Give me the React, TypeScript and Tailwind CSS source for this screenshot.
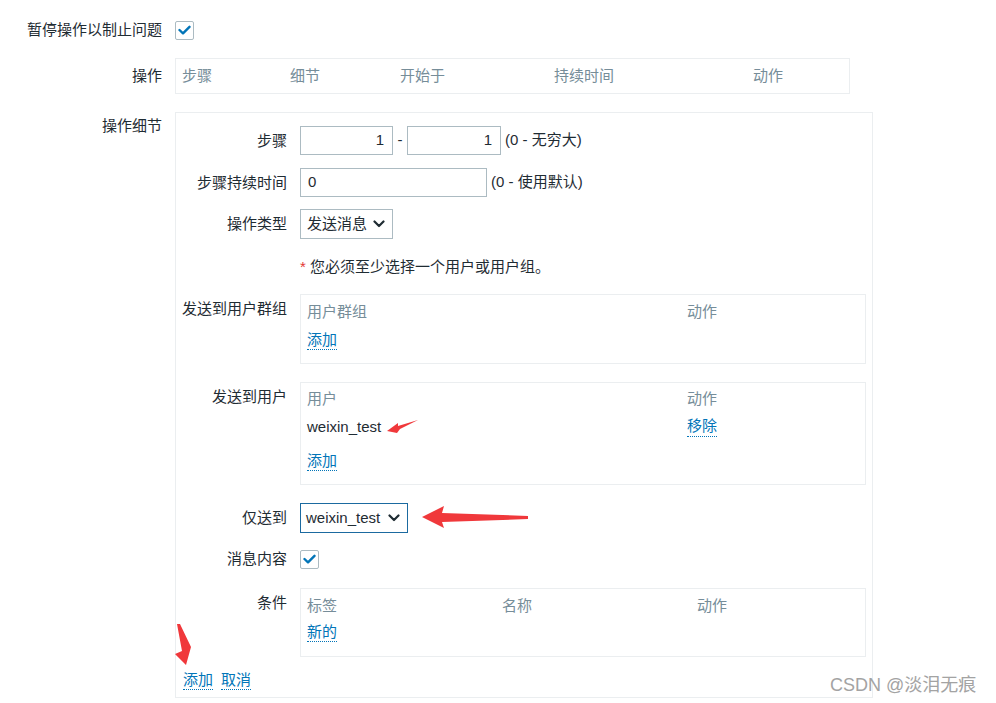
import React from "react";

const LABEL = "text-[#1f2c33]";
const HEAD = "text-[#768d99]";

function Check() {
  return (
    <span className="flex h-[19px] w-[19px] items-center justify-center rounded-[2px] border border-[#acbbc2] bg-white">
      <svg width="13" height="10" viewBox="0 0 13 10" fill="none">
        <path d="M1.5 5 L5 8.3 L11.5 1.8" stroke="#0275b8" strokeWidth="2.4" strokeLinecap="round" strokeLinejoin="round" />
      </svg>
    </span>
  );
}

function Chevron() {
  return (
    <svg width="12" height="8" viewBox="0 0 12 8" fill="none">
      <path d="M1.5 1.5 L6 6 L10.5 1.5" stroke="#1f2c33" strokeWidth="2.2" strokeLinecap="round" strokeLinejoin="round" />
    </svg>
  );
}

function Link({ children }: { children: React.ReactNode }) {
  return (
    <span className="inline-block border-b border-dotted border-[#0275b8] leading-[18px] text-[#0275b8]">
      {children}
    </span>
  );
}

function Row({
  label,
  children,
  className = "",
  labelClass = "",
  center = false,
}: {
  label: string;
  children: React.ReactNode;
  className?: string;
  labelClass?: string;
  center?: boolean;
}) {
  return (
    <div className={`flex gap-[13px] ${center ? "items-center" : "items-start"} ${className}`}>
      <div className={`w-[105px] shrink-0 text-right leading-[20px] ${LABEL} ${labelClass}`}>{label}</div>
      {children}
    </div>
  );
}

export default function App() {
  return (
    <div className="relative h-[703px] w-[996px] overflow-hidden bg-white pt-[20px] font-['Liberation_Sans','Noto_Sans_CJK_SC',sans-serif] text-[15px]">
      {/* 暂停操作 */}
      <div className="flex items-center gap-[13px]">
        <div className={`w-[162px] text-right leading-[20px] ${LABEL}`}>暂停操作以制止问题</div>
        <Check />
      </div>

      {/* 操作 */}
      <div className="mt-[18px] flex items-start gap-[13px]">
        <div className={`w-[162px] pt-[8px] text-right leading-[20px] ${LABEL}`}>操作</div>
        <div className={`flex h-[36px] w-[675px] items-center border border-[#ebeef0] pl-[6px] leading-[20px] ${HEAD}`}>
          <span className="w-[108px]">步骤</span>
          <span className="w-[110px]">细节</span>
          <span className="w-[154px]">开始于</span>
          <span className="w-[199px]">持续时间</span>
          <span>动作</span>
        </div>
      </div>

      {/* 操作细节 */}
      <div className="mt-[18px] flex items-start gap-[13px]">
        <div className={`w-[162px] pt-[4px] text-right leading-[20px] ${LABEL}`}>操作细节</div>
        <div className="h-[586px] w-[698px] border border-[#ebeef0] pl-[6px] pr-[6px] pt-[13px]">
          <Row label="步骤" center>
            <div className="flex items-center">
              <div className={`flex h-[29px] w-[93px] items-center justify-end border border-[#acbbc2] pr-[8px] ${LABEL}`}>1</div>
              <span className={`w-[14px] text-center ${LABEL}`}>-</span>
              <div className={`flex h-[29px] w-[94px] items-center justify-end border border-[#acbbc2] pr-[8px] ${LABEL}`}>1</div>
              <span className={`ml-[4px] ${LABEL}`}>(0 - 无穷大)</span>
            </div>
          </Row>

          <Row label="步骤持续时间" center className="mt-[13px]">
            <div className="flex items-center">
              <div className={`flex h-[29px] w-[187px] items-center border border-[#acbbc2] pl-[7px] ${LABEL}`}>0</div>
              <span className={`ml-[4px] ${LABEL}`}>(0 - 使用默认)</span>
            </div>
          </Row>

          <Row label="操作类型" center className="mt-[12px]">
            <div className={`flex h-[30px] w-[93px] items-center justify-between border border-[#acbbc2] pl-[6px] pr-[7px] ${LABEL}`}>
              <span>发送消息</span>
              <Chevron />
            </div>
          </Row>

          <Row label="" className="mt-[18px]">
            <div className={`leading-[20px] ${LABEL}`}>
              <span className="text-[#e33734]">*</span> 您必须至少选择一个用户或用户组。
            </div>
          </Row>

          <Row label="发送到用户群组" className="mt-[17px]" labelClass="pt-[5px]">
            <div className="h-[70px] w-[566px] border border-[#ebeef0] pl-[6px] pt-[7px] leading-[20px]">
              <div className={`flex ${HEAD}`}>
                <span className="w-[380px]">用户群组</span>
                <span>动作</span>
              </div>
              <div className="mt-[8px]">
                <Link>添加</Link>
              </div>
            </div>
          </Row>

          <Row label="发送到用户" className="mt-[18px]" labelClass="pt-[5px]">
            <div className="h-[103px] w-[566px] border border-[#ebeef0] pl-[6px] pt-[6px] leading-[20px]">
              <div className={`flex ${HEAD}`}>
                <span className="w-[380px]">用户</span>
                <span>动作</span>
              </div>
              <div className="mt-[8px] flex">
                <span className={`w-[380px] ${LABEL}`}>weixin_test</span>
                <Link>移除</Link>
              </div>
              <div className="mt-[14px]">
                <Link>添加</Link>
              </div>
            </div>
          </Row>

          <Row label="仅送到" center className="mt-[18px]">
            <div className={`flex h-[30px] w-[108px] items-center justify-between border border-[#1b6aa0] pl-[5px] pr-[7px] ${LABEL}`}>
              <span>weixin_test</span>
              <Chevron />
            </div>
          </Row>

          <Row label="消息内容" center className="mt-[16px]">
            <Check />
          </Row>

          <Row label="条件" className="mt-[19px]" labelClass="pt-[5px]">
            <div className="h-[69px] w-[566px] border border-[#ebeef0] pl-[6px] pt-[7px] leading-[20px]">
              <div className={`flex ${HEAD}`}>
                <span className="w-[195px]">标签</span>
                <span className="w-[195px]">名称</span>
                <span>动作</span>
              </div>
              <div className="mt-[6px]">
                <Link>新的</Link>
              </div>
            </div>
          </Row>

          <div className="mt-[14px] flex gap-[8px] pl-[1px]">
            <Link>添加</Link>
            <Link>取消</Link>
          </div>
        </div>
      </div>

      {/* annotation arrows */}
      <svg className="pointer-events-none absolute left-0 top-0" width="996" height="703">
        <polygon points="387,431 398,423 398,426 418,420 400,429 397,433" fill="#f0383b" />
        <polygon points="422,517 444,506 442,513 528,516 528,519 442,522 444,528" fill="#f0383b" />
        <polygon points="177,624 180,624 191,647 186,665 175,654 182,651" fill="#f0383b" />
      </svg>

      <div className="absolute left-[830px] top-[673px] text-[18px] leading-[24px] text-[#a3a3a3]">CSDN @淡泪无痕</div>
    </div>
  );
}
